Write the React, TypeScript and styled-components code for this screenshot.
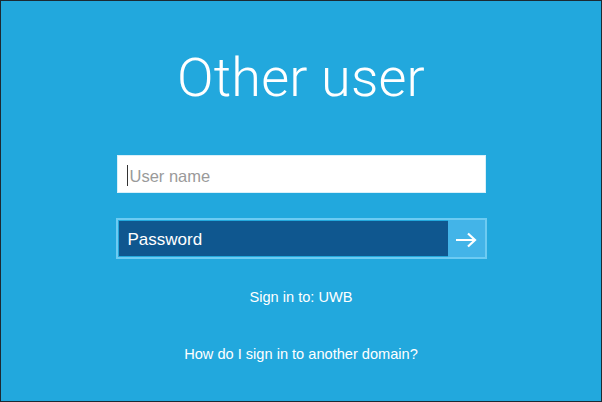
import styled, { createGlobalStyle } from 'styled-components';

const GlobalStyle = createGlobalStyle`
  html, body {
    margin: 0;
    padding: 0;
    background: #22a8dd;
  }
  * {
    box-sizing: border-box;
  }
`;

const Screen = styled.div`
  width: 602px;
  height: 402px;
  border: 1px solid #1c2a33;
  background-color: #22a8dd;
  display: flex;
  flex-direction: column;
  align-items: center;
  font-family: 'Liberation Sans', Arial, sans-serif;
  color: #ffffff;
`;

const Title = styled.h1`
  margin: 46px 0 0;
  font-family: Roboto, 'Liberation Sans', sans-serif;
  font-weight: 300;
  font-size: 54px;
  line-height: 62px;
  letter-spacing: 0.2px;
`;

const Form = styled.form`
  margin-top: 46px;
  width: 371px;
  display: flex;
  flex-direction: column;
  gap: 25px;
`;

const TextField = styled.div`
  height: 38px;
  margin: 0 1px;
  background: #ffffff;
  border: 1px solid #d9f0fa;
  display: flex;
  align-items: center;
  padding: 4px 0 0 9px;
`;

const Caret = styled.span`
  width: 1px;
  height: 21px;
  background: #333333;
  margin: -2px 2px 0 0;
`;

const Placeholder = styled.span`
  font-size: 16.5px;
  color: #9a9a9a;
`;

const PasswordRow = styled.div`
  height: 41px;
  border: 2px solid #6dcbf2;
  display: flex;
`;

const PasswordField = styled.div`
  flex: 1;
  background: #0f578f;
  display: flex;
  align-items: center;
  padding: 3px 0 0 9px;
  font-size: 17px;
  margin: 1px 0 1px 1px;
`;

const SubmitButton = styled.button`
  width: 37px;
  border: none;
  padding: 2px 0 0;
  background: #43b4e8;
  display: flex;
  align-items: center;
  justify-content: center;
  cursor: pointer;
`;

const SignInTo = styled.div`
  margin-top: 29px;
  font-size: 14.6px;
  line-height: 18px;
`;

const HelpLink = styled.a`
  margin-top: 39px;
  font-size: 14.6px;
  line-height: 18px;
  color: #ffffff;
  text-decoration: none;
`;

const App = () => {
  return (
    <>
      <GlobalStyle />
      <Screen>
        <Title>Other user</Title>
        <Form onSubmit={(e) => e.preventDefault()}>
          <TextField>
            <Caret />
            <Placeholder>User name</Placeholder>
          </TextField>
          <PasswordRow>
            <PasswordField>Password</PasswordField>
            <SubmitButton type="submit" aria-label="Sign in">
              <svg width="22" height="16" viewBox="0 0 22 16" fill="none">
                <path d="M1 8h19M13 1.5 20 8l-7 6.5" stroke="#ffffff" strokeWidth="2.2" />
              </svg>
            </SubmitButton>
          </PasswordRow>
        </Form>
        <SignInTo>Sign in to: UWB</SignInTo>
        <HelpLink href="#">How do I sign in to another domain?</HelpLink>
      </Screen>
    </>
  );
};

export default App;
